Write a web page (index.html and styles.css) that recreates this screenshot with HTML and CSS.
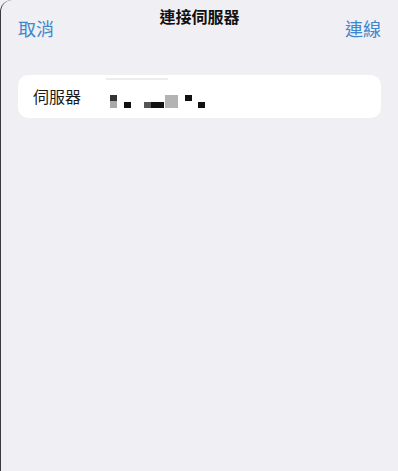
FILE: index.html
```html
<!DOCTYPE html>
<html lang="zh-Hant">
<head>
<meta charset="utf-8">
<link rel="stylesheet" href="styles.css">
</head>
<body>
<div class="sheet">
  <div class="nav">
    <span class="btn">取消</span>
    <span class="title">連接伺服器</span>
    <span class="btn">連線</span>
  </div>
  <div class="card">
    <span class="label">伺服器</span>
    <div class="mask">
      <div class="px p0"></div>
      <div class="px p1"></div>
      <div class="px p2"></div>
      <div class="px p3"></div>
      <div class="px p4"></div>
      <div class="px p5"></div>
      <div class="px p6"></div>
      <div class="px p7"></div>
      <div class="px p8"></div>
    </div>
  </div>
</div>
</body>
</html>
```

FILE: styles.css
```css
html, body {
  margin: 0;
  padding: 0;
  width: 398px;
  height: 471px;
  overflow: hidden;
  background: #efeff4;
}
body {
  font-family: "Noto Sans CJK TC", "Noto Sans", sans-serif;
}
.sheet {
  height: 471px;
  background: #efeff4;
  border-left: 1px solid #3a3a3c;
  border-radius: 12px 12px 0 0;
  box-sizing: border-box;
  padding: 0 17px 0 17px;
}
.nav {
  display: flex;
  justify-content: space-between;
  align-items: flex-start;
  height: 75px;
}
.btn {
  color: #3d87cf;
  font-size: 18px;
  line-height: 24px;
  margin-top: 16px;
}
.title {
  font-size: 16px;
  font-weight: 700;
  line-height: 22px;
  margin-top: 5px;
  color: #111;
}
.card {
  background: #fff;
  border-radius: 10px;
  height: 43px;
  display: flex;
  align-items: center;
  padding-left: 15px;
}
.label {
  font-size: 16px;
  color: #1a1a1a;
  width: 76px;
  margin-top: -2px;
}
.mask {
  position: relative;
  width: 100px;
  height: 43px;
}
.px { position: absolute; }
.p0 { left: -3px; top: 3px; width: 62px; height: 2px; background: #ededf0; }
.p1 { left: 1px; top: 20px; width: 7px; height: 6px; background: #333; }
.p2 { left: 1px; top: 26px; width: 7px; height: 7px; background: #aaa; }
.p3 { left: 15px; top: 27px; width: 7px; height: 6px; background: #111; }
.p4 { left: 35px; top: 27px; width: 7px; height: 6px; background: #555; }
.p5 { left: 42px; top: 27px; width: 13px; height: 6px; background: #111; }
.p6 { left: 56px; top: 20px; width: 13px; height: 13px; background: #b3b3b3; }
.p7 { left: 76px; top: 20px; width: 7px; height: 6px; background: #111; }
.p8 { left: 89px; top: 27px; width: 7px; height: 6px; background: #111; }
```
